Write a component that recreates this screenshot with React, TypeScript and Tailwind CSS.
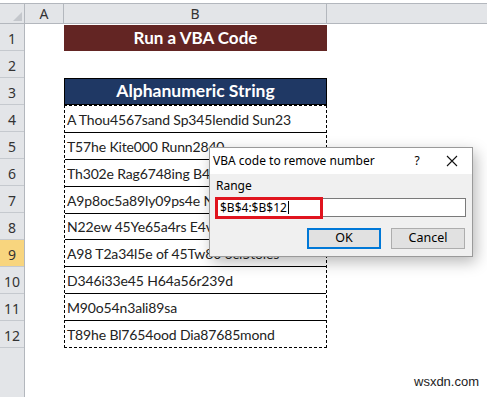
import React from 'react';

const rows = [
  'A Thou4567sand Sp345lendid Sun23',
  'T57he Kite000 Runn2840',
  'Th302e Rag6748ing B4ull',
  'A9p8oc5a89ly09ps4e Now',
  'N22ew 45Ye65a4rs E4ve',
  'A98 T2a34l5e of 45Tw80 6ci5toies',
  'D346i33e45 H64a56r239d',
  'M90o54n3ali89sa',
  'T89he Bl7654ood Dia87685mond',
];

const cellFont = { fontFamily: 'Lato, "Open Sans", sans-serif' };
const uiFont = { fontFamily: '"Noto Sans", "Open Sans", sans-serif' };

const App: React.FC = () => {
  const nums = Array.from({ length: 12 }, (_, i) => i + 1);

  return (
    <div className="relative w-[487px] h-[397px] overflow-hidden bg-white pt-[3px]" style={uiFont}>
      {/* column headers */}
      <div className="flex h-[21px] border-t border-b border-[#b3b7bd] bg-[#e3e5e8] text-[14px] text-[#333]">
        <div className="w-[25px] border-r border-[#b3b7bd] flex items-end justify-end p-[2px]">
          <div className="w-0 h-0 border-l-[9px] border-l-transparent border-b-[9px] border-b-[#c4c7cc]" />
        </div>
        <div className="w-[39px] border-r border-[#b3b7bd] flex items-center justify-center">A</div>
        <div className="w-[263px] border-r border-[#b3b7bd] flex items-center justify-center">B</div>
        <div className="flex-1" />
      </div>

      <div className="flex">
        {/* row numbers */}
        <div className="w-[25px] h-[373px] bg-[#e3e5e8] border-r border-[#b3b7bd] flex flex-col text-[14px] text-[#333]">
          {nums.map((n) => (
            <div
              key={n}
              className={`h-[27px] border-b border-[#c5c9ce] flex items-center justify-center pt-[2px] ${n === 9 ? 'bg-[#f8d57e]' : ''}`}
            >
              {n}
            </div>
          ))}
        </div>

        {/* column A */}
        <div className="w-[39px]" />

        {/* column B */}
        <div className="w-[263px] flex flex-col" style={cellFont}>
          <div className="h-[27px] pt-px">
            <div className="h-full bg-[#632523] text-white font-bold text-[17px] flex items-center justify-center">
              Run a VBA Code
            </div>
          </div>
          <div className="h-[27px]" />
          <div className="h-[27px] bg-[#1f3864] border border-black text-white font-bold text-[17.5px] flex items-center justify-center">
            Alphanumeric String
          </div>
          <div className="h-[243px] border border-dashed border-black flex flex-col">
            {rows.map((t, i) => (
              <div
                key={i}
                className={`flex-1 flex items-end pl-[2px] pb-[2px] text-[14px] tracking-[-0.15px] text-[#222] whitespace-nowrap ${i < rows.length - 1 ? 'border-b border-black' : ''}`}
              >
                {t}
              </div>
            ))}
          </div>
        </div>

        {/* column C */}
        <div className="flex-1" />
      </div>

      {/* dialog */}
      <div className="absolute left-[209px] top-[147px] w-[264px] h-[110px] border border-[#9a9a9a] bg-[#f0f0f0] shadow-[3px_5px_14px_rgba(0,0,0,0.28)] flex flex-col">
        <div className="h-[26px] bg-white flex items-center pl-[3px] text-[12px] text-black">
          <span className="flex-1">VBA code to remove number</span>
          <span className="w-[30px] text-center">?</span>
          <svg className="mx-[14px]" width="12" height="12" viewBox="0 0 12 12">
            <path d="M1 1 L11 11 M11 1 L1 11" stroke="#111" strokeWidth="1.1" />
          </svg>
        </div>
        <div className="flex-1 flex flex-col px-[6px] pt-[6px]">
          <div className="text-[12px] text-black leading-none">Range</div>
          <div className="relative mt-[6px] h-[19px] bg-white border border-[#7a7a7a] flex items-center pl-[3px] text-[12px] text-black">
            $B$4:$B$12<span className="ml-px w-px h-[13px] bg-black" />
            <div className="absolute left-[-2px] top-[-2px] w-[108px] h-[22px] border-[3px] border-[#e0141e]" />
          </div>
          <div className="flex justify-end gap-[10px] mt-[11px] pr-px">
            <div className="w-[74px] h-[21px] bg-[#e1e1e1] border-2 border-[#0078d7] flex items-center justify-center text-[12.5px] text-black">
              OK
            </div>
            <div className="w-[74px] h-[21px] bg-[#e1e1e1] border border-[#adadad] flex items-center justify-center text-[12.5px] text-black">
              Cancel
            </div>
          </div>
        </div>
      </div>

      <div className="absolute left-[414px] top-[372px] text-[13px] text-[#222]" style={{ fontFamily: '"Liberation Sans", Arial, sans-serif' }}>
        wsxdn.com
      </div>
    </div>
  );
};

export default App;
